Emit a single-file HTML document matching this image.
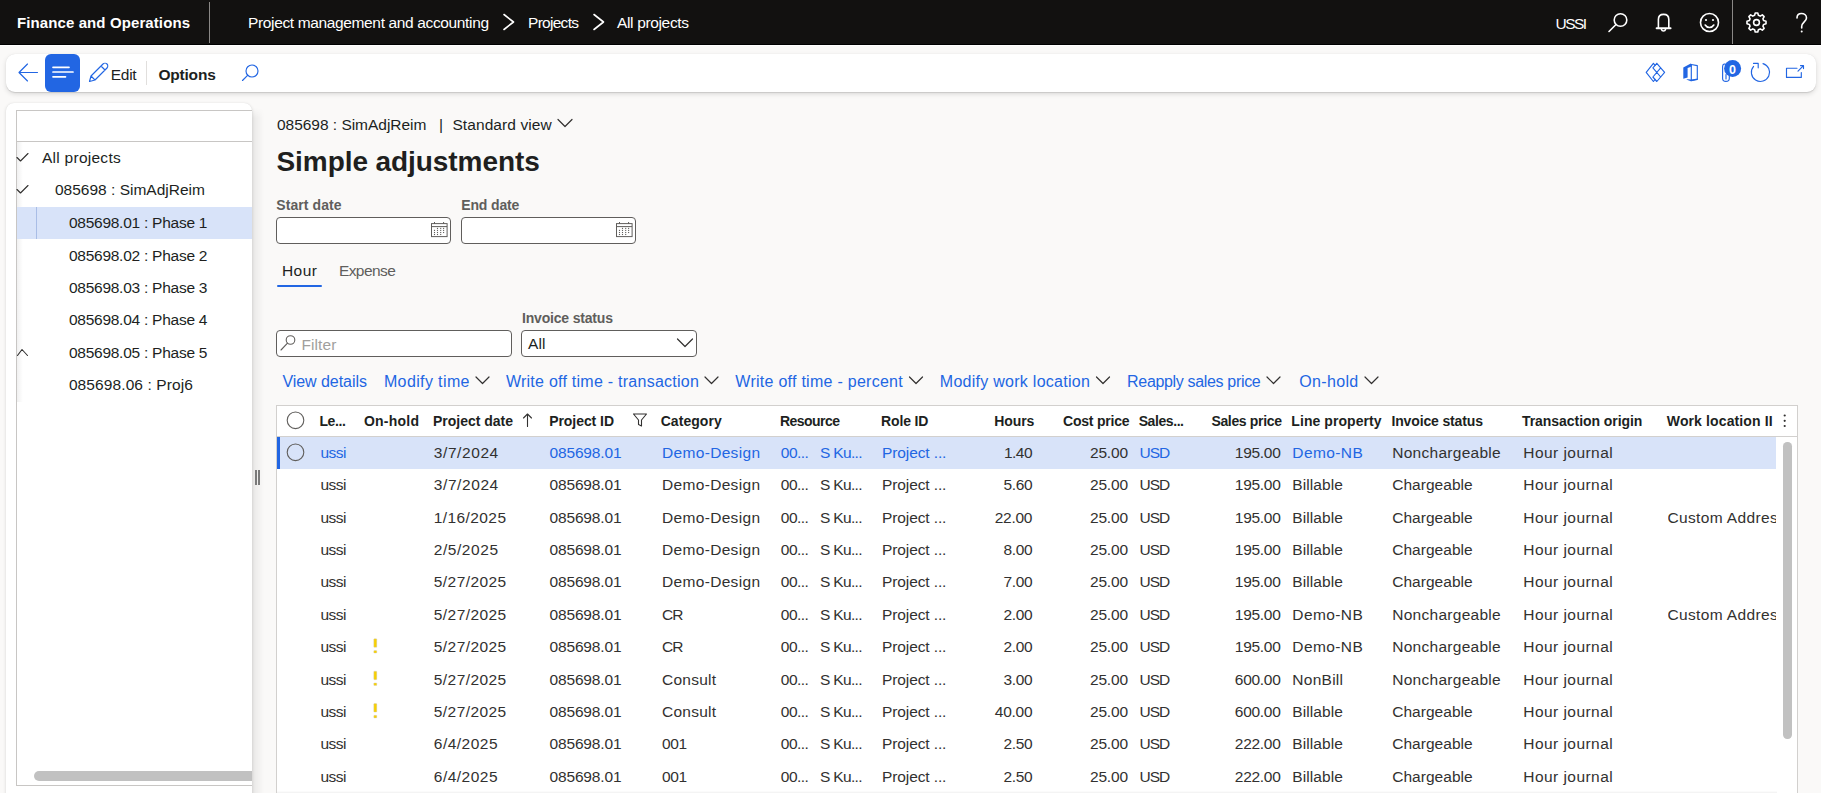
<!DOCTYPE html>
<html><head><meta charset="utf-8">
<style>
html,body{margin:0;padding:0;}
body{width:1821px;height:793px;overflow:hidden;position:relative;background:#faf9f8;font-family:"Liberation Sans",sans-serif;color:#201f1e;}
.a{position:absolute;}
.t{position:absolute;white-space:nowrap;line-height:normal;}
svg{position:absolute;overflow:visible;}
</style></head><body>
<!-- top bar -->
<div class="a" style="left:0;top:0;width:1821px;height:44px;background:#121110;"></div>
<div class="a" style="left:0;top:44px;width:1821px;height:1px;background:#000;"></div>
<div class="a" style="left:0;top:45px;width:1821px;height:1px;background:#fff;"></div>
<div class="a" style="left:209px;top:2px;width:1px;height:41px;background:#8a8886;"></div>
<div class="a" style="left:1732px;top:0;width:1px;height:44px;background:#8a8886;"></div>
<svg style="left:0;top:0" width="1821" height="44">
  <g fill="none" stroke="#fff" stroke-width="1.6" stroke-linecap="round" stroke-linejoin="round">
    <path d="M504 14.5 L513.5 22 L504 29.5"/>
    <path d="M594 14.5 L603.5 22 L594 29.5"/>
    <!-- search -->
    <circle cx="1620.5" cy="20" r="6.3"/>
    <path d="M1609 31.5 L1616 24.5"/>
    <!-- bell -->
    <path d="M1658.4 28 L1658.4 19.5 C1658.4 16 1660.6 14.4 1663.6 14.4 C1666.6 14.4 1668.8 16 1668.8 19.5 L1668.8 28"/>
    <path d="M1656.6 28.3 L1670.6 28.3" stroke-width="1.9"/>
    <path d="M1661.5 29.5 C1662 31.5 1665 31.5 1665.5 29.5"/>
    <!-- smiley -->
    <circle cx="1709.5" cy="22.5" r="9"/>
    <path d="M1705.2 25 C1707.2 28.3 1711.8 28.3 1713.8 25"/>
    <!-- gear -->
    <circle cx="1756.5" cy="22.5" r="2.9"/>
    <path d="M1766.01 21.22 L1766.01 23.78 L1763.65 24.40 L1762.90 26.22 L1764.13 28.32 L1762.32 30.13 L1760.22 28.90 L1758.40 29.65 L1757.78 32.01 L1755.22 32.01 L1754.60 29.65 L1752.78 28.90 L1750.68 30.13 L1748.87 28.32 L1750.10 26.22 L1749.35 24.40 L1746.99 23.78 L1746.99 21.22 L1749.35 20.60 L1750.10 18.78 L1748.87 16.68 L1750.68 14.87 L1752.78 16.10 L1754.60 15.35 L1755.22 12.99 L1757.78 12.99 L1758.40 15.35 L1760.22 16.10 L1762.32 14.87 L1764.13 16.68 L1762.90 18.78 L1763.65 20.60 Z"/>
    <!-- ? -->
    <path d="M1797 18 C1797 14.5 1799.5 13.5 1801.5 13.5 C1804 13.5 1806.5 15 1806.5 18 C1806.5 21.5 1801.7 22.5 1801.7 26.5 L1801.7 28"/>
  </g>
  <circle cx="1801.7" cy="31.5" r="1" fill="#fff"/><circle cx="1706" cy="20" r="1.1" fill="#fff"/><circle cx="1713" cy="20" r="1.1" fill="#fff"/>
</svg>

<!-- toolbar card -->
<div class="a" style="left:6px;top:54px;width:1810px;height:38px;background:#fff;border-radius:9px;box-shadow:0 2px 5px rgba(0,0,0,0.13),0 0.3px 0.9px rgba(0,0,0,0.11);"></div>
<div class="a" style="left:45px;top:54px;width:35px;height:38px;background:#2266e3;border-radius:6px;"></div>
<div class="a" style="left:146px;top:61px;width:1px;height:24px;background:#e1dfdd;"></div>
<svg style="left:0;top:0" width="1821" height="100">
  <g fill="none" stroke="#2266e3" stroke-width="1.15" stroke-linecap="round" stroke-linejoin="round">
    <path d="M19 72.5 L37.5 72.5 M27.5 64 L19 72.5 L27.5 81"/>
    <!-- pencil -->
    <path d="M89.5 81.5 L91 76 L103 64 C104 63 106 63 107 64 C108 65 108 67 107 68 L95 80 Z M101 66 L105 70 M91 76 L94.5 79.5"/>
    <!-- search -->
    <circle cx="252" cy="71" r="6"/>
    <path d="M242.5 80.5 L247.8 75.2"/>
    <!-- right icons -->
    <path d="M1655.1 65.4 L1653.4 63.3 L1646.2 72.4 L1653.4 81.5 L1655.1 79.4"/>
    <path d="M1656.8 63.3 L1664.6 72.4 L1656.8 81.5 L1652.9 77 L1660.7 67.8 M1656.8 63.3 L1652.9 67.8 L1660.7 77"/>
    <!-- office -->
    <path d="M1691.3 64.5 L1697.3 65.6 L1697.3 79.4 L1691.3 80.6 Z"/>
    <!-- paperclip -->
    <path d="M1729.3 73 L1729.3 78.5 C1729.3 82.3 1722.6 82.3 1722.6 78.5 L1722.6 66.5 C1722.6 63.8 1725.5 63.5 1726.2 64.8 M1726 74.5 L1726 79"/>
    <!-- refresh -->
    <path d="M1763 63.6 A9.1 9.1 0 1 1 1753.6 66.4"/>
    <path d="M1753.5 63.4 L1758.2 63.4 L1758.2 67.8"/>
    <!-- open -->
    <path d="M1797 68.2 L1786.5 68.2 L1786.5 77.4 L1801.3 77.4 L1801.3 72.5 M1798 71.2 L1803.5 65.6 M1800.5 65.6 L1803.5 65.6 L1803.5 68.6"/>
  </g>
  <g stroke="#fff" stroke-width="1.7" stroke-linecap="round">
    <path d="M53 67.3 L69 67.3 M53 72 L73 72 M53 76.8 L65.5 76.8"/>
  </g>
  <path fill="#2266e3" d="M1683.3 67.6 L1690.8 63.6 L1691.6 64.2 L1691.6 66.6 L1687.6 67.9 L1687.6 77.6 L1683.3 78.8 Z M1686.2 79.6 L1690.8 81.3 L1697.6 79.6 L1697.6 78.6 L1691.6 79.6 L1687.6 79.2 Z"/>
  <circle cx="1732.6" cy="68.4" r="8.5" fill="#2266e3"/>
  <text x="1732.5" y="74" font-family="Liberation Sans" font-weight="700" font-size="12.5" fill="#fff" text-anchor="middle">0</text>
</svg>

<!-- left panel -->
<div class="a" style="left:6px;top:103px;width:246px;height:700px;background:#fff;border-radius:8px 8px 0 0;box-shadow:0 1.6px 3.6px rgba(0,0,0,0.13),0 0.3px 0.9px rgba(0,0,0,0.11);"></div>
<div class="a" style="left:16px;top:110px;width:236px;height:676px;border:1px solid #c8c6c4;border-right:none;box-sizing:border-box;"></div>
<div class="a" style="left:17px;top:141px;width:235px;height:1px;background:#c8c6c4;"></div>
<div class="a" style="left:17px;top:142px;width:6px;height:260px;background:linear-gradient(to right,rgba(0,0,0,0.06),rgba(0,0,0,0));"></div>
<div class="a" style="left:17px;top:207px;width:235px;height:31.5px;background:#d8e3f9;"></div>
<div class="a" style="left:36px;top:207px;width:1px;height:31.5px;background:#a9bde6;"></div>
<div class="a" style="left:34px;top:771px;width:218px;height:10px;background:#c1c1c1;border-radius:5px 0 0 5px;"></div>
<svg style="left:0;top:0" width="260" height="400">
  <g fill="none" stroke="#323130" stroke-width="1.1" stroke-linecap="round" stroke-linejoin="round">
    <path d="M17 157.5 L20.5 161 L28 153.5"/>
    <path d="M17 189.5 L20.5 193 L28 185.5"/>
    <path d="M17.5 355.5 L22 349.5 L27.5 355.5"/>
  </g>
</svg>
<!-- splitter -->
<div class="a" style="left:252px;top:108px;width:12px;height:690px;background:linear-gradient(to right,rgba(0,0,0,0.07),rgba(0,0,0,0));-webkit-mask-image:linear-gradient(to bottom,transparent,#000 10px);"></div>
<div class="a" style="left:255px;top:470px;width:1.8px;height:15px;background:#7a7a7a;"></div>
<div class="a" style="left:258.1px;top:470px;width:1.8px;height:15px;background:#7a7a7a;"></div>

<!-- form fields -->
<div class="a" style="left:276px;top:217px;width:175px;height:27px;background:#fff;border:1px solid #605e5c;border-radius:4px;box-sizing:border-box;"></div>
<div class="a" style="left:461px;top:217px;width:175px;height:27px;background:#fff;border:1px solid #605e5c;border-radius:4px;box-sizing:border-box;"></div>
<div class="a" style="left:276px;top:329.5px;width:236px;height:27.5px;background:#fff;border:1px solid #605e5c;border-radius:4px;box-sizing:border-box;"></div>
<div class="a" style="left:521px;top:330px;width:176px;height:27px;background:#fff;border:1px solid #605e5c;border-radius:4px;box-sizing:border-box;"></div>
<div class="a" style="left:277px;top:284.5px;width:45px;height:2.5px;background:#2266e3;border-radius:2px;"></div>
<svg style="left:0;top:0" width="760" height="400">
  <g fill="none" stroke="#323130" stroke-width="1.2" stroke-linecap="round" stroke-linejoin="round">
    <path d="M558 119.5 L565 126.5 L572 119.5"/>
    <path d="M677.5 339 L685 346.5 L692.5 339"/>
  </g>
  <g fill="none" stroke="#605e5c" stroke-width="1"><rect x="431.5" y="223.6" width="15.6" height="13" /><path d="M431.5 226.6 L447.1 226.6 M434.5 222 L434.5 224 M443.6 222 L443.6 224"/><rect x="616.5" y="223.6" width="15.6" height="13" /><path d="M616.5 226.6 L632.1 226.6 M619.5 222 L619.5 224 M628.6 222 L628.6 224"/></g>
  <g fill="#605e5c"><rect x="436.95" y="227.85" width="1.1" height="1.1"/><rect x="440.15" y="227.85" width="1.1" height="1.1"/><rect x="443.05" y="227.85" width="1.1" height="1.1"/><rect x="433.95" y="229.85" width="1.1" height="1.1"/><rect x="436.95" y="229.85" width="1.1" height="1.1"/><rect x="440.15" y="229.85" width="1.1" height="1.1"/><rect x="443.05" y="229.85" width="1.1" height="1.1"/><rect x="433.95" y="231.95" width="1.1" height="1.1"/><rect x="436.95" y="231.95" width="1.1" height="1.1"/><rect x="440.15" y="231.95" width="1.1" height="1.1"/><rect x="443.05" y="231.95" width="1.1" height="1.1"/><rect x="433.95" y="233.95" width="1.1" height="1.1"/><rect x="436.95" y="233.95" width="1.1" height="1.1"/><rect x="440.15" y="233.95" width="1.1" height="1.1"/><rect x="621.95" y="227.85" width="1.1" height="1.1"/><rect x="625.15" y="227.85" width="1.1" height="1.1"/><rect x="628.05" y="227.85" width="1.1" height="1.1"/><rect x="618.95" y="229.85" width="1.1" height="1.1"/><rect x="621.95" y="229.85" width="1.1" height="1.1"/><rect x="625.15" y="229.85" width="1.1" height="1.1"/><rect x="628.05" y="229.85" width="1.1" height="1.1"/><rect x="618.95" y="231.95" width="1.1" height="1.1"/><rect x="621.95" y="231.95" width="1.1" height="1.1"/><rect x="625.15" y="231.95" width="1.1" height="1.1"/><rect x="628.05" y="231.95" width="1.1" height="1.1"/><rect x="618.95" y="233.95" width="1.1" height="1.1"/><rect x="621.95" y="233.95" width="1.1" height="1.1"/><rect x="625.15" y="233.95" width="1.1" height="1.1"/></g>
  <g fill="none" stroke="#605e5c" stroke-width="1.1" stroke-linecap="round">
    <circle cx="290.5" cy="340" r="4.3"/>
    <path d="M281 350 L287.5 343.2"/>
  </g>
  <g fill="none" stroke="#323130" stroke-width="1.2" stroke-linecap="round" stroke-linejoin="round">
    <path d="M476 377 L482.5 383.5 L489 377"/>
    <path d="M705 377 L711.5 383.5 L718 377"/>
  </g>
</svg>
<svg style="left:0;top:0" width="1821" height="400">
  <g fill="none" stroke="#323130" stroke-width="1.2" stroke-linecap="round" stroke-linejoin="round">
    <path d="M909.5 377 L916 383.5 L922.5 377"/>
    <path d="M1096.5 377 L1103 383.5 L1109.5 377"/>
    <path d="M1267 377 L1273.5 383.5 L1280 377"/>
    <path d="M1365 377 L1371.5 383.5 L1378 377"/>
  </g>
</svg>

<!-- grid -->
<div class="a" style="left:276px;top:404.5px;width:1522px;height:400px;background:#fff;border:1px solid #d2d0ce;box-sizing:border-box;"></div>
<div class="a" style="left:277px;top:436px;width:1520px;height:1px;background:#d2d0ce;"></div>
<div class="a" style="left:277px;top:437px;width:1499px;height:32px;background:#d8e3f9;"></div>
<div class="a" style="left:277px;top:437px;width:3px;height:32px;background:#2266e3;"></div>
<div class="a" style="left:1783.4px;top:442.3px;width:8.4px;height:297px;background:#c1c1c1;border-radius:4.2px;"></div>
<svg style="left:0;top:0" width="1821" height="793">
  <g fill="none" stroke="#605e5c" stroke-width="1.1">
    <circle cx="295.5" cy="420.3" r="8.3"/>
    <circle cx="295.5" cy="452.3" r="8.3"/>
  </g>
  <g fill="none" stroke="#323130" stroke-width="1.1" stroke-linecap="round" stroke-linejoin="round">
    <path d="M527.5 414 L527.5 426.5 M523.5 418 L527.5 414 L531.5 418"/>
    <path d="M633.5 414 L646.5 414 L641.5 420 L641.5 426 L638.5 424.5 L638.5 420 Z"/>
  </g>
  <g fill="#323130">
    <circle cx="1784.7" cy="415.5" r="1.1"/><circle cx="1784.7" cy="420.8" r="1.1"/><circle cx="1784.7" cy="426" r="1.1"/>
  </g>
  <g fill="#f8d000" stroke="#c9cbd6" stroke-width="0.4">
    <rect x="373.8" y="638.8" width="3" height="8.5" rx="0.6"/><rect x="373.8" y="650.5" width="3" height="2.6" rx="0.6"/>
    <rect x="373.8" y="671.2" width="3" height="8.5" rx="0.6"/><rect x="373.8" y="682.9" width="3" height="2.6" rx="0.6"/>
    <rect x="373.8" y="703.6" width="3" height="8.5" rx="0.6"/><rect x="373.8" y="715.3" width="3" height="2.6" rx="0.6"/>
  </g>
</svg>

<div class="a" style="left:277px;top:791px;width:1500px;height:2px;background:linear-gradient(to bottom,rgba(0,0,0,0),rgba(0,0,0,0.06));"></div>
<div class="t" style="top:14.42px;font-size:15px;font-weight:700;color:#ffffff;letter-spacing:0.102px;left:17.00px;">Finance and Operations</div>
<div class="t" style="top:13.77px;font-size:15.5px;color:#ffffff;letter-spacing:-0.358px;left:248.00px;">Project management and accounting</div>
<div class="t" style="top:13.77px;font-size:15.5px;color:#ffffff;letter-spacing:-0.713px;left:528.00px;">Projects</div>
<div class="t" style="top:13.77px;font-size:15.5px;color:#ffffff;letter-spacing:-0.346px;left:617.00px;">All projects</div>
<div class="t" style="top:14.77px;font-size:15.5px;color:#ffffff;letter-spacing:-1.559px;left:1555.50px;">USSI</div>
<div class="t" style="top:65.97px;font-size:15.5px;letter-spacing:-0.303px;left:110.80px;">Edit</div>
<div class="t" style="top:65.57px;font-size:15.5px;font-weight:700;letter-spacing:-0.191px;left:158.40px;">Options</div>
<div class="t" style="top:149.27px;font-size:15.5px;letter-spacing:0.263px;left:42.00px;">All projects</div>
<div class="t" style="top:181.47px;font-size:15.5px;left:55.00px;">085698 : SimAdjReim</div>
<div class="t" style="top:214.37px;font-size:15.5px;letter-spacing:-0.248px;left:68.90px;">085698.01 : Phase 1</div>
<div class="t" style="top:246.67px;font-size:15.5px;letter-spacing:-0.248px;left:68.90px;">085698.02 : Phase 2</div>
<div class="t" style="top:278.97px;font-size:15.5px;letter-spacing:-0.248px;left:68.90px;">085698.03 : Phase 3</div>
<div class="t" style="top:311.27px;font-size:15.5px;letter-spacing:-0.248px;left:68.90px;">085698.04 : Phase 4</div>
<div class="t" style="top:343.57px;font-size:15.5px;letter-spacing:-0.248px;left:68.90px;">085698.05 : Phase 5</div>
<div class="t" style="top:375.87px;font-size:15.5px;letter-spacing:0.102px;left:68.90px;">085698.06 : Proj6</div>
<div class="t" style="top:116.07px;font-size:15.5px;letter-spacing:-0.028px;left:277.00px;">085698 : SimAdjReim</div>
<div class="t" style="top:116.07px;font-size:15.5px;left:439.00px;">|</div>
<div class="t" style="top:116.07px;font-size:15.5px;letter-spacing:0.090px;left:452.40px;">Standard view</div>
<div class="t" style="top:146.45px;font-size:28px;font-weight:700;letter-spacing:-0.071px;left:276.50px;">Simple adjustments</div>
<div class="t" style="top:197.13px;font-size:14px;font-weight:700;color:#605e5c;letter-spacing:0.081px;left:276.30px;">Start date</div>
<div class="t" style="top:197.13px;font-size:14px;font-weight:700;color:#605e5c;letter-spacing:-0.131px;left:461.20px;">End date</div>
<div class="t" style="top:261.57px;font-size:15.5px;letter-spacing:0.501px;left:281.90px;">Hour</div>
<div class="t" style="top:261.57px;font-size:15.5px;color:#605e5c;letter-spacing:-0.570px;left:338.90px;">Expense</div>
<div class="t" style="top:310.33px;font-size:14px;font-weight:700;color:#605e5c;letter-spacing:-0.182px;left:522.00px;">Invoice status</div>
<div class="t" style="top:335.97px;font-size:15.5px;color:#a19f9d;letter-spacing:0.111px;left:301.40px;">Filter</div>
<div class="t" style="top:334.97px;font-size:15.5px;letter-spacing:0.087px;left:528.00px;">All</div>
<div class="t" style="top:372.82px;font-size:16px;color:#2266e3;letter-spacing:-0.044px;left:282.40px;">View details</div>
<div class="t" style="top:372.82px;font-size:16px;color:#2266e3;letter-spacing:0.380px;left:383.90px;">Modify time</div>
<div class="t" style="top:372.82px;font-size:16px;color:#2266e3;letter-spacing:0.254px;left:505.90px;">Write off time - transaction</div>
<div class="t" style="top:372.82px;font-size:16px;color:#2266e3;letter-spacing:0.268px;left:735.30px;">Write off time - percent</div>
<div class="t" style="top:372.82px;font-size:16px;color:#2266e3;letter-spacing:0.271px;left:939.80px;">Modify work location</div>
<div class="t" style="top:372.82px;font-size:16px;color:#2266e3;letter-spacing:-0.335px;left:1127.10px;">Reapply sales price</div>
<div class="t" style="top:372.82px;font-size:16px;color:#2266e3;letter-spacing:0.330px;left:1299.30px;">On-hold</div>
<div class="t" style="top:413.33px;font-size:14px;font-weight:700;letter-spacing:-0.352px;left:319.40px;">Le...</div>
<div class="t" style="top:413.33px;font-size:14px;font-weight:700;letter-spacing:0.242px;left:363.90px;">On-hold</div>
<div class="t" style="top:413.33px;font-size:14px;font-weight:700;letter-spacing:-0.013px;left:433.00px;">Project date</div>
<div class="t" style="top:413.33px;font-size:14px;font-weight:700;letter-spacing:-0.061px;left:549.20px;">Project ID</div>
<div class="t" style="top:413.33px;font-size:14px;font-weight:700;letter-spacing:0.045px;left:660.70px;">Category</div>
<div class="t" style="top:413.33px;font-size:14px;font-weight:700;letter-spacing:-0.530px;left:779.90px;">Resource</div>
<div class="t" style="top:413.33px;font-size:14px;font-weight:700;letter-spacing:-0.138px;left:881.00px;">Role ID</div>
<div class="t" style="top:413.33px;font-size:14px;font-weight:700;letter-spacing:-0.218px;left:1063.00px;">Cost price</div>
<div class="t" style="top:413.33px;font-size:14px;font-weight:700;letter-spacing:-0.422px;left:1138.70px;">Sales...</div>
<div class="t" style="top:413.33px;font-size:14px;font-weight:700;letter-spacing:-0.334px;left:1211.40px;">Sales price</div>
<div class="t" style="top:413.33px;font-size:14px;font-weight:700;letter-spacing:0.070px;left:1291.30px;">Line property</div>
<div class="t" style="top:413.33px;font-size:14px;font-weight:700;letter-spacing:-0.136px;left:1391.40px;">Invoice status</div>
<div class="t" style="top:413.33px;font-size:14px;font-weight:700;letter-spacing:-0.056px;left:1522.00px;">Transaction origin</div>
<div class="t" style="top:413.33px;font-size:14px;font-weight:700;letter-spacing:0.122px;left:1666.80px;">Work location II</div>
<div class="t" style="top:413.33px;font-size:14px;font-weight:700;letter-spacing:-0.112px;left:994.30px;">Hours</div>
<div class="t" style="top:443.87px;font-size:15.5px;color:#2266e3;letter-spacing:-0.521px;left:320.40px;">ussi</div>
<div class="t" style="top:443.87px;font-size:15.5px;color:#323130;letter-spacing:0.581px;left:433.80px;">3/7/2024</div>
<div class="t" style="top:443.87px;font-size:15.5px;color:#2266e3;letter-spacing:-0.159px;left:549.50px;">085698.01</div>
<div class="t" style="top:443.87px;font-size:15.5px;color:#2266e3;letter-spacing:0.324px;left:662.00px;">Demo-Design</div>
<div class="t" style="top:443.87px;font-size:15.5px;color:#2266e3;letter-spacing:-0.540px;left:780.80px;">00...</div>
<div class="t" style="top:443.87px;font-size:15.5px;color:#2266e3;letter-spacing:-0.670px;left:820.00px;">S Ku...</div>
<div class="t" style="top:443.87px;font-size:15.5px;color:#2266e3;letter-spacing:-0.107px;left:882.00px;">Project ...</div>
<div class="t" style="top:443.87px;font-size:15.5px;color:#323130;letter-spacing:-0.556px;right:789.06px;">1.40</div>
<div class="t" style="top:443.87px;font-size:15.5px;color:#323130;letter-spacing:-0.197px;right:693.20px;">25.00</div>
<div class="t" style="top:443.87px;font-size:15.5px;color:#2266e3;letter-spacing:-1.063px;left:1139.60px;">USD</div>
<div class="t" style="top:443.87px;font-size:15.5px;color:#323130;letter-spacing:-0.282px;right:540.48px;">195.00</div>
<div class="t" style="top:443.87px;font-size:15.5px;color:#2266e3;letter-spacing:0.410px;left:1292.30px;">Demo-NB</div>
<div class="t" style="top:443.87px;font-size:15.5px;color:#323130;letter-spacing:0.281px;left:1392.20px;">Nonchargeable</div>
<div class="t" style="top:443.87px;font-size:15.5px;color:#323130;letter-spacing:0.452px;left:1523.30px;">Hour journal</div>
<div class="t" style="top:476.27px;font-size:15.5px;color:#323130;letter-spacing:-0.521px;left:320.40px;">ussi</div>
<div class="t" style="top:476.27px;font-size:15.5px;color:#323130;letter-spacing:0.581px;left:433.80px;">3/7/2024</div>
<div class="t" style="top:476.27px;font-size:15.5px;color:#323130;letter-spacing:-0.159px;left:549.50px;">085698.01</div>
<div class="t" style="top:476.27px;font-size:15.5px;color:#323130;letter-spacing:0.324px;left:662.00px;">Demo-Design</div>
<div class="t" style="top:476.27px;font-size:15.5px;color:#323130;letter-spacing:-0.540px;left:780.80px;">00...</div>
<div class="t" style="top:476.27px;font-size:15.5px;color:#323130;letter-spacing:-0.670px;left:820.00px;">S Ku...</div>
<div class="t" style="top:476.27px;font-size:15.5px;color:#323130;letter-spacing:-0.107px;left:882.00px;">Project ...</div>
<div class="t" style="top:476.27px;font-size:15.5px;color:#323130;letter-spacing:-0.389px;right:788.89px;">5.60</div>
<div class="t" style="top:476.27px;font-size:15.5px;color:#323130;letter-spacing:-0.197px;right:693.20px;">25.00</div>
<div class="t" style="top:476.27px;font-size:15.5px;color:#323130;letter-spacing:-1.063px;left:1139.60px;">USD</div>
<div class="t" style="top:476.27px;font-size:15.5px;color:#323130;letter-spacing:-0.282px;right:540.48px;">195.00</div>
<div class="t" style="top:476.27px;font-size:15.5px;color:#323130;letter-spacing:0.075px;left:1292.30px;">Billable</div>
<div class="t" style="top:476.27px;font-size:15.5px;color:#323130;letter-spacing:0.040px;left:1392.20px;">Chargeable</div>
<div class="t" style="top:476.27px;font-size:15.5px;color:#323130;letter-spacing:0.452px;left:1523.30px;">Hour journal</div>
<div class="t" style="top:508.67px;font-size:15.5px;color:#323130;letter-spacing:-0.521px;left:320.40px;">ussi</div>
<div class="t" style="top:508.67px;font-size:15.5px;color:#323130;letter-spacing:0.406px;left:433.80px;">1/16/2025</div>
<div class="t" style="top:508.67px;font-size:15.5px;color:#323130;letter-spacing:-0.159px;left:549.50px;">085698.01</div>
<div class="t" style="top:508.67px;font-size:15.5px;color:#323130;letter-spacing:0.324px;left:662.00px;">Demo-Design</div>
<div class="t" style="top:508.67px;font-size:15.5px;color:#323130;letter-spacing:-0.540px;left:780.80px;">00...</div>
<div class="t" style="top:508.67px;font-size:15.5px;color:#323130;letter-spacing:-0.670px;left:820.00px;">S Ku...</div>
<div class="t" style="top:508.67px;font-size:15.5px;color:#323130;letter-spacing:-0.107px;left:882.00px;">Project ...</div>
<div class="t" style="top:508.67px;font-size:15.5px;color:#323130;letter-spacing:-0.247px;right:788.75px;">22.00</div>
<div class="t" style="top:508.67px;font-size:15.5px;color:#323130;letter-spacing:-0.197px;right:693.20px;">25.00</div>
<div class="t" style="top:508.67px;font-size:15.5px;color:#323130;letter-spacing:-1.063px;left:1139.60px;">USD</div>
<div class="t" style="top:508.67px;font-size:15.5px;color:#323130;letter-spacing:-0.282px;right:540.48px;">195.00</div>
<div class="t" style="top:508.67px;font-size:15.5px;color:#323130;letter-spacing:0.075px;left:1292.30px;">Billable</div>
<div class="t" style="top:508.67px;font-size:15.5px;color:#323130;letter-spacing:0.040px;left:1392.20px;">Chargeable</div>
<div class="t" style="top:508.67px;font-size:15.5px;color:#323130;letter-spacing:0.452px;left:1523.30px;">Hour journal</div>
<div class="t" style="top:508.67px;font-size:15.5px;color:#323130;letter-spacing:0.348px;width:108.5px;overflow:hidden;left:1667.50px;">Custom Addres</div>
<div class="t" style="top:541.07px;font-size:15.5px;color:#323130;letter-spacing:-0.521px;left:320.40px;">ussi</div>
<div class="t" style="top:541.07px;font-size:15.5px;color:#323130;letter-spacing:0.552px;left:433.80px;">2/5/2025</div>
<div class="t" style="top:541.07px;font-size:15.5px;color:#323130;letter-spacing:-0.159px;left:549.50px;">085698.01</div>
<div class="t" style="top:541.07px;font-size:15.5px;color:#323130;letter-spacing:0.324px;left:662.00px;">Demo-Design</div>
<div class="t" style="top:541.07px;font-size:15.5px;color:#323130;letter-spacing:-0.540px;left:780.80px;">00...</div>
<div class="t" style="top:541.07px;font-size:15.5px;color:#323130;letter-spacing:-0.670px;left:820.00px;">S Ku...</div>
<div class="t" style="top:541.07px;font-size:15.5px;color:#323130;letter-spacing:-0.107px;left:882.00px;">Project ...</div>
<div class="t" style="top:541.07px;font-size:15.5px;color:#323130;letter-spacing:-0.389px;right:788.89px;">8.00</div>
<div class="t" style="top:541.07px;font-size:15.5px;color:#323130;letter-spacing:-0.197px;right:693.20px;">25.00</div>
<div class="t" style="top:541.07px;font-size:15.5px;color:#323130;letter-spacing:-1.063px;left:1139.60px;">USD</div>
<div class="t" style="top:541.07px;font-size:15.5px;color:#323130;letter-spacing:-0.282px;right:540.48px;">195.00</div>
<div class="t" style="top:541.07px;font-size:15.5px;color:#323130;letter-spacing:0.075px;left:1292.30px;">Billable</div>
<div class="t" style="top:541.07px;font-size:15.5px;color:#323130;letter-spacing:0.040px;left:1392.20px;">Chargeable</div>
<div class="t" style="top:541.07px;font-size:15.5px;color:#323130;letter-spacing:0.452px;left:1523.30px;">Hour journal</div>
<div class="t" style="top:573.47px;font-size:15.5px;color:#323130;letter-spacing:-0.521px;left:320.40px;">ussi</div>
<div class="t" style="top:573.47px;font-size:15.5px;color:#323130;letter-spacing:0.431px;left:433.80px;">5/27/2025</div>
<div class="t" style="top:573.47px;font-size:15.5px;color:#323130;letter-spacing:-0.159px;left:549.50px;">085698.01</div>
<div class="t" style="top:573.47px;font-size:15.5px;color:#323130;letter-spacing:0.324px;left:662.00px;">Demo-Design</div>
<div class="t" style="top:573.47px;font-size:15.5px;color:#323130;letter-spacing:-0.540px;left:780.80px;">00...</div>
<div class="t" style="top:573.47px;font-size:15.5px;color:#323130;letter-spacing:-0.670px;left:820.00px;">S Ku...</div>
<div class="t" style="top:573.47px;font-size:15.5px;color:#323130;letter-spacing:-0.107px;left:882.00px;">Project ...</div>
<div class="t" style="top:573.47px;font-size:15.5px;color:#323130;letter-spacing:-0.389px;right:788.89px;">7.00</div>
<div class="t" style="top:573.47px;font-size:15.5px;color:#323130;letter-spacing:-0.197px;right:693.20px;">25.00</div>
<div class="t" style="top:573.47px;font-size:15.5px;color:#323130;letter-spacing:-1.063px;left:1139.60px;">USD</div>
<div class="t" style="top:573.47px;font-size:15.5px;color:#323130;letter-spacing:-0.282px;right:540.48px;">195.00</div>
<div class="t" style="top:573.47px;font-size:15.5px;color:#323130;letter-spacing:0.075px;left:1292.30px;">Billable</div>
<div class="t" style="top:573.47px;font-size:15.5px;color:#323130;letter-spacing:0.040px;left:1392.20px;">Chargeable</div>
<div class="t" style="top:573.47px;font-size:15.5px;color:#323130;letter-spacing:0.452px;left:1523.30px;">Hour journal</div>
<div class="t" style="top:605.87px;font-size:15.5px;color:#323130;letter-spacing:-0.521px;left:320.40px;">ussi</div>
<div class="t" style="top:605.87px;font-size:15.5px;color:#323130;letter-spacing:0.431px;left:433.80px;">5/27/2025</div>
<div class="t" style="top:605.87px;font-size:15.5px;color:#323130;letter-spacing:-0.159px;left:549.50px;">085698.01</div>
<div class="t" style="top:605.87px;font-size:15.5px;color:#323130;letter-spacing:-0.887px;left:662.00px;">CR</div>
<div class="t" style="top:605.87px;font-size:15.5px;color:#323130;letter-spacing:-0.540px;left:780.80px;">00...</div>
<div class="t" style="top:605.87px;font-size:15.5px;color:#323130;letter-spacing:-0.670px;left:820.00px;">S Ku...</div>
<div class="t" style="top:605.87px;font-size:15.5px;color:#323130;letter-spacing:-0.107px;left:882.00px;">Project ...</div>
<div class="t" style="top:605.87px;font-size:15.5px;color:#323130;letter-spacing:-0.389px;right:788.89px;">2.00</div>
<div class="t" style="top:605.87px;font-size:15.5px;color:#323130;letter-spacing:-0.197px;right:693.20px;">25.00</div>
<div class="t" style="top:605.87px;font-size:15.5px;color:#323130;letter-spacing:-1.063px;left:1139.60px;">USD</div>
<div class="t" style="top:605.87px;font-size:15.5px;color:#323130;letter-spacing:-0.282px;right:540.48px;">195.00</div>
<div class="t" style="top:605.87px;font-size:15.5px;color:#323130;letter-spacing:0.410px;left:1292.30px;">Demo-NB</div>
<div class="t" style="top:605.87px;font-size:15.5px;color:#323130;letter-spacing:0.281px;left:1392.20px;">Nonchargeable</div>
<div class="t" style="top:605.87px;font-size:15.5px;color:#323130;letter-spacing:0.452px;left:1523.30px;">Hour journal</div>
<div class="t" style="top:605.87px;font-size:15.5px;color:#323130;letter-spacing:0.348px;width:108.5px;overflow:hidden;left:1667.50px;">Custom Addres</div>
<div class="t" style="top:638.27px;font-size:15.5px;color:#323130;letter-spacing:-0.521px;left:320.40px;">ussi</div>
<div class="t" style="top:638.27px;font-size:15.5px;color:#323130;letter-spacing:0.431px;left:433.80px;">5/27/2025</div>
<div class="t" style="top:638.27px;font-size:15.5px;color:#323130;letter-spacing:-0.159px;left:549.50px;">085698.01</div>
<div class="t" style="top:638.27px;font-size:15.5px;color:#323130;letter-spacing:-0.887px;left:662.00px;">CR</div>
<div class="t" style="top:638.27px;font-size:15.5px;color:#323130;letter-spacing:-0.540px;left:780.80px;">00...</div>
<div class="t" style="top:638.27px;font-size:15.5px;color:#323130;letter-spacing:-0.670px;left:820.00px;">S Ku...</div>
<div class="t" style="top:638.27px;font-size:15.5px;color:#323130;letter-spacing:-0.107px;left:882.00px;">Project ...</div>
<div class="t" style="top:638.27px;font-size:15.5px;color:#323130;letter-spacing:-0.389px;right:788.89px;">2.00</div>
<div class="t" style="top:638.27px;font-size:15.5px;color:#323130;letter-spacing:-0.197px;right:693.20px;">25.00</div>
<div class="t" style="top:638.27px;font-size:15.5px;color:#323130;letter-spacing:-1.063px;left:1139.60px;">USD</div>
<div class="t" style="top:638.27px;font-size:15.5px;color:#323130;letter-spacing:-0.282px;right:540.48px;">195.00</div>
<div class="t" style="top:638.27px;font-size:15.5px;color:#323130;letter-spacing:0.410px;left:1292.30px;">Demo-NB</div>
<div class="t" style="top:638.27px;font-size:15.5px;color:#323130;letter-spacing:0.281px;left:1392.20px;">Nonchargeable</div>
<div class="t" style="top:638.27px;font-size:15.5px;color:#323130;letter-spacing:0.452px;left:1523.30px;">Hour journal</div>
<div class="t" style="top:670.67px;font-size:15.5px;color:#323130;letter-spacing:-0.521px;left:320.40px;">ussi</div>
<div class="t" style="top:670.67px;font-size:15.5px;color:#323130;letter-spacing:0.431px;left:433.80px;">5/27/2025</div>
<div class="t" style="top:670.67px;font-size:15.5px;color:#323130;letter-spacing:-0.159px;left:549.50px;">085698.01</div>
<div class="t" style="top:670.67px;font-size:15.5px;color:#323130;letter-spacing:0.241px;left:662.00px;">Consult</div>
<div class="t" style="top:670.67px;font-size:15.5px;color:#323130;letter-spacing:-0.540px;left:780.80px;">00...</div>
<div class="t" style="top:670.67px;font-size:15.5px;color:#323130;letter-spacing:-0.670px;left:820.00px;">S Ku...</div>
<div class="t" style="top:670.67px;font-size:15.5px;color:#323130;letter-spacing:-0.107px;left:882.00px;">Project ...</div>
<div class="t" style="top:670.67px;font-size:15.5px;color:#323130;letter-spacing:-0.389px;right:788.89px;">3.00</div>
<div class="t" style="top:670.67px;font-size:15.5px;color:#323130;letter-spacing:-0.197px;right:693.20px;">25.00</div>
<div class="t" style="top:670.67px;font-size:15.5px;color:#323130;letter-spacing:-1.063px;left:1139.60px;">USD</div>
<div class="t" style="top:670.67px;font-size:15.5px;color:#323130;letter-spacing:-0.282px;right:540.48px;">600.00</div>
<div class="t" style="top:670.67px;font-size:15.5px;color:#323130;letter-spacing:0.264px;left:1292.30px;">NonBill</div>
<div class="t" style="top:670.67px;font-size:15.5px;color:#323130;letter-spacing:0.281px;left:1392.20px;">Nonchargeable</div>
<div class="t" style="top:670.67px;font-size:15.5px;color:#323130;letter-spacing:0.452px;left:1523.30px;">Hour journal</div>
<div class="t" style="top:703.07px;font-size:15.5px;color:#323130;letter-spacing:-0.521px;left:320.40px;">ussi</div>
<div class="t" style="top:703.07px;font-size:15.5px;color:#323130;letter-spacing:0.431px;left:433.80px;">5/27/2025</div>
<div class="t" style="top:703.07px;font-size:15.5px;color:#323130;letter-spacing:-0.159px;left:549.50px;">085698.01</div>
<div class="t" style="top:703.07px;font-size:15.5px;color:#323130;letter-spacing:0.241px;left:662.00px;">Consult</div>
<div class="t" style="top:703.07px;font-size:15.5px;color:#323130;letter-spacing:-0.540px;left:780.80px;">00...</div>
<div class="t" style="top:703.07px;font-size:15.5px;color:#323130;letter-spacing:-0.670px;left:820.00px;">S Ku...</div>
<div class="t" style="top:703.07px;font-size:15.5px;color:#323130;letter-spacing:-0.107px;left:882.00px;">Project ...</div>
<div class="t" style="top:703.07px;font-size:15.5px;color:#323130;letter-spacing:-0.272px;right:788.77px;">40.00</div>
<div class="t" style="top:703.07px;font-size:15.5px;color:#323130;letter-spacing:-0.197px;right:693.20px;">25.00</div>
<div class="t" style="top:703.07px;font-size:15.5px;color:#323130;letter-spacing:-1.063px;left:1139.60px;">USD</div>
<div class="t" style="top:703.07px;font-size:15.5px;color:#323130;letter-spacing:-0.282px;right:540.48px;">600.00</div>
<div class="t" style="top:703.07px;font-size:15.5px;color:#323130;letter-spacing:0.075px;left:1292.30px;">Billable</div>
<div class="t" style="top:703.07px;font-size:15.5px;color:#323130;letter-spacing:0.040px;left:1392.20px;">Chargeable</div>
<div class="t" style="top:703.07px;font-size:15.5px;color:#323130;letter-spacing:0.452px;left:1523.30px;">Hour journal</div>
<div class="t" style="top:735.47px;font-size:15.5px;color:#323130;letter-spacing:-0.521px;left:320.40px;">ussi</div>
<div class="t" style="top:735.47px;font-size:15.5px;color:#323130;letter-spacing:0.481px;left:433.80px;">6/4/2025</div>
<div class="t" style="top:735.47px;font-size:15.5px;color:#323130;letter-spacing:-0.159px;left:549.50px;">085698.01</div>
<div class="t" style="top:735.47px;font-size:15.5px;color:#323130;letter-spacing:-0.431px;left:662.00px;">001</div>
<div class="t" style="top:735.47px;font-size:15.5px;color:#323130;letter-spacing:-0.540px;left:780.80px;">00...</div>
<div class="t" style="top:735.47px;font-size:15.5px;color:#323130;letter-spacing:-0.670px;left:820.00px;">S Ku...</div>
<div class="t" style="top:735.47px;font-size:15.5px;color:#323130;letter-spacing:-0.107px;left:882.00px;">Project ...</div>
<div class="t" style="top:735.47px;font-size:15.5px;color:#323130;letter-spacing:-0.389px;right:788.89px;">2.50</div>
<div class="t" style="top:735.47px;font-size:15.5px;color:#323130;letter-spacing:-0.197px;right:693.20px;">25.00</div>
<div class="t" style="top:735.47px;font-size:15.5px;color:#323130;letter-spacing:-1.063px;left:1139.60px;">USD</div>
<div class="t" style="top:735.47px;font-size:15.5px;color:#323130;letter-spacing:-0.282px;right:540.48px;">222.00</div>
<div class="t" style="top:735.47px;font-size:15.5px;color:#323130;letter-spacing:0.075px;left:1292.30px;">Billable</div>
<div class="t" style="top:735.47px;font-size:15.5px;color:#323130;letter-spacing:0.040px;left:1392.20px;">Chargeable</div>
<div class="t" style="top:735.47px;font-size:15.5px;color:#323130;letter-spacing:0.452px;left:1523.30px;">Hour journal</div>
<div class="t" style="top:767.87px;font-size:15.5px;color:#323130;letter-spacing:-0.521px;left:320.40px;">ussi</div>
<div class="t" style="top:767.87px;font-size:15.5px;color:#323130;letter-spacing:0.481px;left:433.80px;">6/4/2025</div>
<div class="t" style="top:767.87px;font-size:15.5px;color:#323130;letter-spacing:-0.159px;left:549.50px;">085698.01</div>
<div class="t" style="top:767.87px;font-size:15.5px;color:#323130;letter-spacing:-0.431px;left:662.00px;">001</div>
<div class="t" style="top:767.87px;font-size:15.5px;color:#323130;letter-spacing:-0.540px;left:780.80px;">00...</div>
<div class="t" style="top:767.87px;font-size:15.5px;color:#323130;letter-spacing:-0.670px;left:820.00px;">S Ku...</div>
<div class="t" style="top:767.87px;font-size:15.5px;color:#323130;letter-spacing:-0.107px;left:882.00px;">Project ...</div>
<div class="t" style="top:767.87px;font-size:15.5px;color:#323130;letter-spacing:-0.389px;right:788.89px;">2.50</div>
<div class="t" style="top:767.87px;font-size:15.5px;color:#323130;letter-spacing:-0.197px;right:693.20px;">25.00</div>
<div class="t" style="top:767.87px;font-size:15.5px;color:#323130;letter-spacing:-1.063px;left:1139.60px;">USD</div>
<div class="t" style="top:767.87px;font-size:15.5px;color:#323130;letter-spacing:-0.282px;right:540.48px;">222.00</div>
<div class="t" style="top:767.87px;font-size:15.5px;color:#323130;letter-spacing:0.075px;left:1292.30px;">Billable</div>
<div class="t" style="top:767.87px;font-size:15.5px;color:#323130;letter-spacing:0.040px;left:1392.20px;">Chargeable</div>
<div class="t" style="top:767.87px;font-size:15.5px;color:#323130;letter-spacing:0.452px;left:1523.30px;">Hour journal</div>
</body></html>
